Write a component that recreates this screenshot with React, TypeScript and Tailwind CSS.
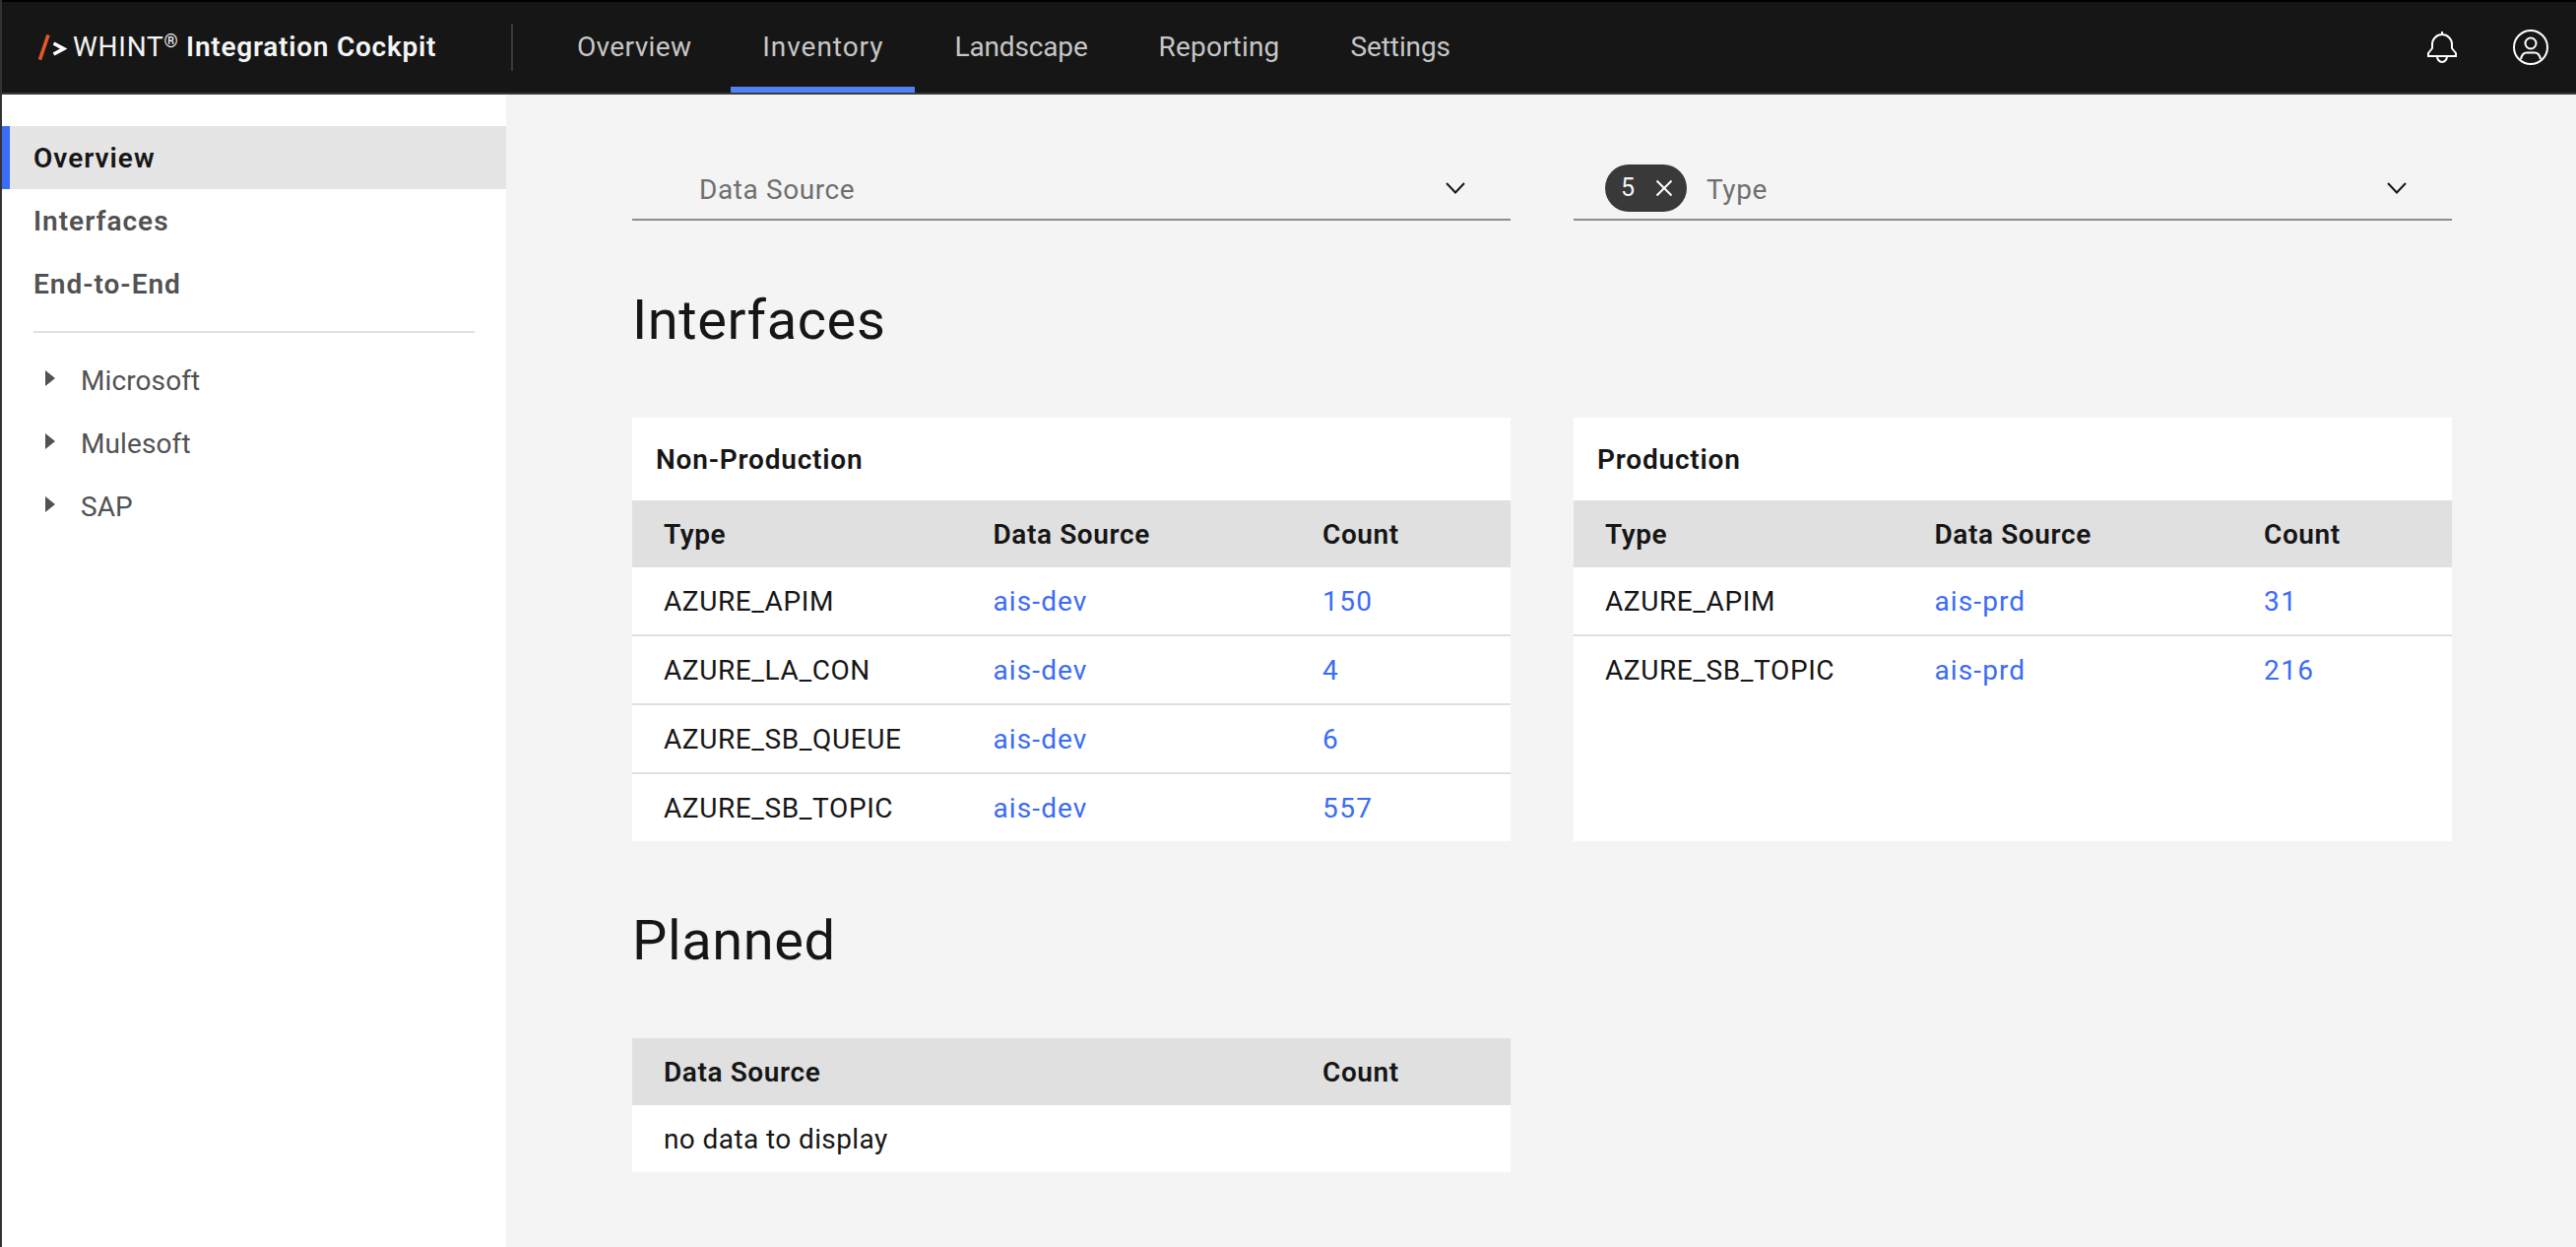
const font = "font-['Roboto','Liberation_Sans',sans-serif]";

const NAV_ITEMS = [
  { label: "Overview", tracking: "tracking-[0.35px]" },
  { label: "Inventory", tracking: "tracking-[0.95px]" },
  { label: "Landscape", tracking: "tracking-[-0.15px]" },
  { label: "Reporting", tracking: "tracking-[0.2px]" },
  { label: "Settings", tracking: "tracking-[-0.1px]" },
];

const Chevron = () => (
  <svg width="20" height="12" viewBox="0 0 20 12" fill="none" className="text-[#161616]">
    <path d="M1 1l9 9.5L19 1" stroke="currentColor" strokeWidth="2" />
  </svg>
);

const Header = () => (
  <header className="flex h-[96px] items-stretch border-t-2 border-b-2 border-t-black border-b-[#393939] bg-[#161616]">
    <div className="flex w-[517px] shrink-0 items-center">
      <svg width="30" height="26" viewBox="0 0 30 26" fill="none" className="ml-[36px] shrink-0">
        <path d="M11 0.5L2.5 25.5" stroke="#e8562a" strokeWidth="3.6" />
        <path d="M16.5 9l10 5.5-10 5.5" stroke="#ffffff" strokeWidth="3.6" />
      </svg>
      <span className="ml-[6px] whitespace-nowrap text-[28px] tracking-[0.75px] text-[#f4f4f4]">
        WHINT<sup className="text-[18px]">®</sup> <span className="font-semibold">Integration Cockpit</span>
      </span>
    </div>
    <div className="my-auto h-[48px] w-[2px] bg-[#393939]" />
    <nav className="ml-[33px] flex items-stretch gap-[8px]">
      {NAV_ITEMS.map((item) => (
        <a
          key={item.label}
          className={`flex items-center border-b-[6px] px-[32px] pt-[6px] text-[28px] text-[#c6c6c6] ${item.tracking} ${
            item.label === "Inventory" ? "border-[#4f83f5]" : "border-transparent"
          }`}
        >
          {item.label}
        </a>
      ))}
    </nav>
    <div className="ml-auto flex items-center gap-[57px] pr-[28px]">
      <svg width="30" height="33" viewBox="0 0 30 33" fill="none" stroke="#ffffff" strokeWidth="2">
        <path d="M15 0v4" />
        <path d="M5 17v-4a10 10 0 0 1 20 0v4l4 5v3H1v-3z" />
        <path d="M10 25a5 6 0 0 0 10 0" />
      </svg>
      <svg width="36" height="36" viewBox="0 0 36 36" fill="none" stroke="#ffffff" strokeWidth="2">
        <circle cx="18" cy="18" r="17" />
        <circle cx="18" cy="14" r="5.5" />
        <path d="M8 30c1-5 4-6.5 6-6.5h8c2 0 5 1.5 6 6.5" />
      </svg>
    </div>
  </header>
);

const SideLink = ({ label, active }: { label: string; active?: boolean }) => (
  <a
    className={`flex h-[64px] items-center border-l-8 pt-[2px] pl-[24px] text-[28px] font-semibold tracking-[1px] ${
      active ? "border-[#3b6cf6] bg-[#e5e5e5] text-[#161616]" : "border-transparent text-[#525252]"
    }`}
  >
    {label}
  </a>
);

const TreeItem = ({ label }: { label: string }) => (
  <div className="flex h-[64px] items-center pl-[44px] text-[28px] tracking-[0.1px] text-[#525252]">
    <svg width="10" height="16" viewBox="0 0 10 16" className="mb-[5px] shrink-0" fill="#525252">
      <path d="M0 0l10 8-10 8z" />
    </svg>
    <span className="ml-[26px] pt-[2px]">{label}</span>
  </div>
);

const Sidebar = () => (
  <aside className="w-[512px] shrink-0 bg-white pt-[32px]">
    <SideLink label="Overview" active />
    <SideLink label="Interfaces" />
    <SideLink label="End-to-End" />
    <div className="mx-[32px] mt-[16px] mb-[16px] h-[2px] bg-[#e0e0e0]" />
    <TreeItem label="Microsoft" />
    <TreeItem label="Mulesoft" />
    <TreeItem label="SAP" />
  </aside>
);

type Row = { type: string; source: string; count: string };

const DataTable = ({ title, rows }: { title: string; rows: Row[] }) => (
  <section className="bg-white">
    <h3 className="flex h-[84px] items-center pt-[2px] pl-[24px] text-[28px] font-semibold tracking-[0.8px] text-[#161616]">{title}</h3>
    <div className="grid h-[68px] grid-cols-[334.5px_334.5px_1fr] items-center bg-[#e0e0e0] pt-[2px] pl-[32px] text-[28px] font-semibold text-[#161616]">
      <span>Type</span>
      <span>Data Source</span>
      <span>Count</span>
    </div>
    {rows.map((row, i) => (
      <div
        key={row.type}
        className={`grid grid-cols-[334.5px_334.5px_1fr] items-center pt-[2px] pl-[32px] text-[28px] text-[#161616] ${
          i < rows.length - 1 ? "h-[70px] border-b-2 border-[#e0e0e0]" : "h-[68px]"
        }`}
      >
        <span>{row.type}</span>
        <a className="tracking-[1.1px] text-[#3b6cf6]">{row.source}</a>
        <a className="tracking-[1.4px] text-[#3b6cf6]">{row.count}</a>
      </div>
    ))}
  </section>
);

const NON_PROD: Row[] = [
  { type: "AZURE_APIM", source: "ais-dev", count: "150" },
  { type: "AZURE_LA_CON", source: "ais-dev", count: "4" },
  { type: "AZURE_SB_QUEUE", source: "ais-dev", count: "6" },
  { type: "AZURE_SB_TOPIC", source: "ais-dev", count: "557" },
];

const PROD: Row[] = [
  { type: "AZURE_APIM", source: "ais-prd", count: "31" },
  { type: "AZURE_SB_TOPIC", source: "ais-prd", count: "216" },
];

const Heading = ({ children }: { children: string }) => (
  <h2 className="flex h-[200px] items-center pt-[2px] text-[56px] leading-[64px] tracking-[0.6px] text-[#161616]">{children}</h2>
);

const Main = () => (
  <main className="flex-1 bg-[#f4f4f4] pt-[64px] pr-[126px] pl-[128px] tracking-[0.6px]">
    <div className="grid grid-cols-2 gap-x-[64px]">
      <div className="flex h-[64px] items-center justify-between border-b-2 border-[#8d8d8d] pr-[46px] pl-[68px] text-[28px] text-[#6f6f6f]">
        <span className="pt-[3px]">Data Source</span>
        <Chevron />
      </div>
      <div className="flex h-[64px] items-center justify-between border-b-2 border-[#8d8d8d] pr-[46px] pl-[32px] text-[28px] text-[#6f6f6f]">
        <div className="flex items-center">
          <span className="flex h-[48px] w-[83px] items-center justify-between rounded-full bg-[#393939] pr-[14px] pl-[16px] text-[#f4f4f4]">
            <span className="text-[25px]">5</span>
            <svg width="18" height="18" viewBox="0 0 18 18" stroke="#ffffff" strokeWidth="2">
              <path d="M1.5 1.5l15 15M16.5 1.5l-15 15" />
            </svg>
          </span>
          <span className="ml-[20px] pt-[3px]">Type</span>
        </div>
        <Chevron />
      </div>
    </div>
    <Heading>Interfaces</Heading>
    <div className="grid grid-cols-2 gap-x-[64px]">
      <DataTable title="Non-Production" rows={NON_PROD} />
      <DataTable title="Production" rows={PROD} />
    </div>
    <Heading>Planned</Heading>
    <div className="grid grid-cols-2 gap-x-[64px]">
      <section className="bg-white text-[28px] text-[#161616]">
        <div className="grid h-[68px] grid-cols-[669px_1fr] items-center bg-[#e0e0e0] pt-[2px] pl-[32px] font-semibold">
          <span>Data Source</span>
          <span>Count</span>
        </div>
        <div className="flex h-[68px] items-center pt-[2px] pl-[32px] tracking-[0.4px]">no data to display</div>
      </section>
    </div>
  </main>
);

export default function App() {
  return (
    <div className={`flex h-[1266px] flex-col overflow-hidden border-l-2 border-[#333333] ${font}`}>
      <Header />
      <div className="flex flex-1">
        <Sidebar />
        <Main />
      </div>
    </div>
  );
}
